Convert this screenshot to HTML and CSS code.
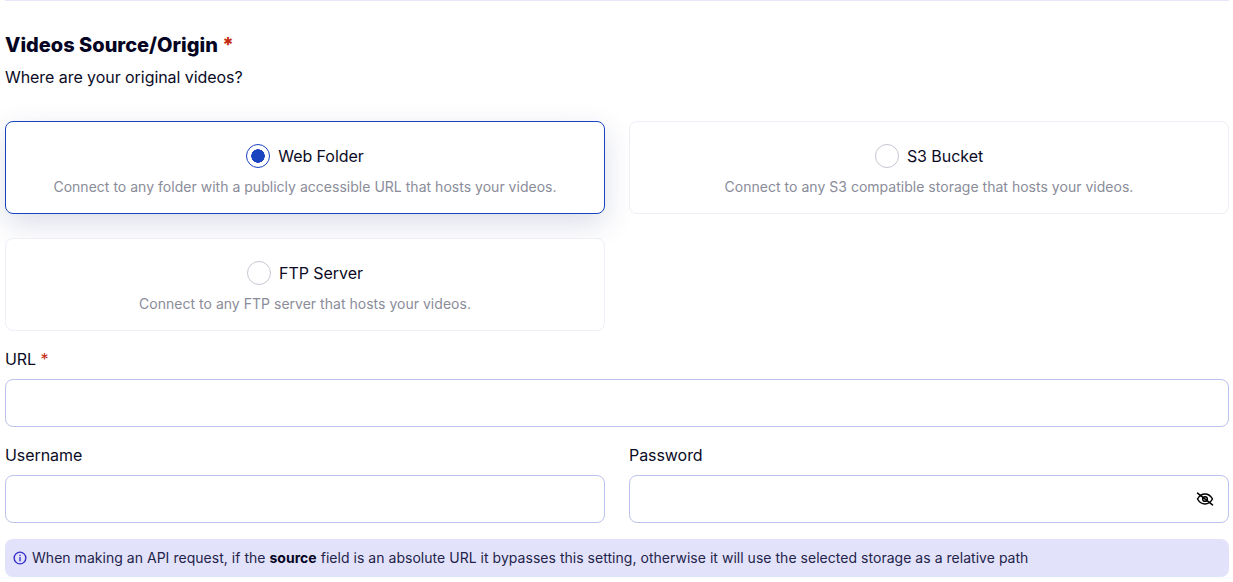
FILE: index.html
```html
<!DOCTYPE html>
<html lang="en">
<head>
    <meta charset="UTF-8" />
    <title>Videos Source/Origin</title>
    <link rel="stylesheet" href="styles.css">
</head>

<body>
    <div class="page">
        <section class="section">
            <h2 class="section-title">Videos Source/Origin <span class="req">*</span></h2>
            <p class="section-sub">Where are your original videos?</p>

            <div class="options">
                <div class="option selected">
                    <div class="option-head">
                        <span class="radio"></span>
                        <span class="option-name">Web Folder</span>
                    </div>
                    <p class="option-desc">Connect to any folder with a publicly accessible URL that hosts your videos.</p>
                </div>
                <div class="option">
                    <div class="option-head">
                        <span class="radio"></span>
                        <span class="option-name">S3 Bucket</span>
                    </div>
                    <p class="option-desc">Connect to any S3 compatible storage that hosts your videos.</p>
                </div>
                <div class="option">
                    <div class="option-head">
                        <span class="radio"></span>
                        <span class="option-name">FTP Server</span>
                    </div>
                    <p class="option-desc">Connect to any FTP server that hosts your videos.</p>
                </div>
            </div>

            <div class="field">
                <label class="field-label">URL <span class="req">*</span></label>
                <div class="input"></div>
            </div>

            <div class="field-row">
                <div class="field">
                    <label class="field-label">Username</label>
                    <div class="input"></div>
                </div>
                <div class="field">
                    <label class="field-label">Password</label>
                    <div class="input input-pwd">
                        <svg class="eye" viewBox="0 0 24 24" fill="none" stroke="#000" stroke-width="1.800" stroke-linecap="round" stroke-linejoin="round">
                            <path d="M3 12c2.300-4 5.300-6 9-6s6.700 2 9 6c-2.300 4-5.300 6-9 6s-6.700-2-9-6z"/>
                            <circle cx="12" cy="12" r="2.800"/>
                            <path d="M3 5l18 14"/>
                        </svg>
                    </div>
                </div>
            </div>

            <div class="notice">
                <svg class="info" viewBox="0 0 24 24" fill="none" stroke="#3730c9" stroke-width="2.400" stroke-linecap="round">
                    <circle cx="12" cy="12" r="10"/>
                    <path d="M12 11v6"/>
                    <path d="M12 7.300v.2"/>
                </svg>
                <span>When making an API request, if the <b>source</b> field is an absolute URL it bypasses this setting, otherwise it will use the selected storage as a relative path</span>
            </div>
        </section>
    </div>
</body>
</html>
```

FILE: styles.css
```css
* {
    box-sizing: border-box;
}

html, body {
    height: 582px;
    overflow: hidden;
}

body {
    margin: 0;
    padding: 0;
    background: #fff;
    font-family: Inter, "Liberation Sans", sans-serif;
    color: #0b0b26;
}

.page {
    padding: 0 4px 0 5px;
}

.section {
    border-top: 1px solid #e6e8fa;
    padding-top: 32px;
}

.section-title {
    margin: 0;
    font-size: 20px;
    line-height: 24px;
    font-weight: 800;
    color: #050523;
}

.req {
    color: #c42b10;
}

.section-sub {
    margin: 8px 0 0 0;
    font-size: 16px;
    line-height: 24px;
    letter-spacing: -0.06px;
}

.options {
    display: grid;
    grid-template-columns: 600px 600px;
    column-gap: 24px;
    row-gap: 24px;
    margin-top: 32px;
}

.option {
    height: 93px;
    padding-top: 22px;
    border: 1px solid #eeeef6;
    border-radius: 8px;
    background: #fff;
    text-align: center;
}

.option.selected {
    border-color: #1a43bf;
    box-shadow: 0 10px 30px rgba(40, 50, 110, 0.16);
}

.option-head {
    display: flex;
    justify-content: center;
    align-items: center;
    gap: 8px;
    height: 24px;
}

.radio {
    width: 24px;
    height: 24px;
    border: 1px solid #c6c8d2;
    border-radius: 50%;
    background: #fff;
}

.selected .radio {
    border-color: #1a43bf;
    background: radial-gradient(circle, #1a43bf 0 6.500px, #fff 7px);
}

.option-name {
    font-size: 16px;
    line-height: 24px;
    letter-spacing: -0.06px;
}

.option-desc {
    margin: 9px 0 0 0;
    font-size: 14px;
    line-height: 20px;
    letter-spacing: 0.02px;
    color: #8a8c99;
}

.field {
    margin-top: 16px;
}

.field-label {
    display: block;
    font-size: 16px;
    line-height: 24px;
    letter-spacing: -0.06px;
}

.input {
    height: 48px;
    margin-top: 8px;
    border: 1px solid #bcc2ea;
    border-radius: 8px;
    background: #fff;
}

.input-pwd {
    display: flex;
    justify-content: flex-end;
    align-items: center;
    padding-right: 13px;
}

.eye {
    width: 20px;
    height: 20px;
}

.field-row {
    display: grid;
    grid-template-columns: 600px 600px;
    column-gap: 24px;
}

.notice {
    display: flex;
    align-items: center;
    gap: 5px;
    height: 38px;
    margin-top: 16px;
    padding: 0 8px;
    border-radius: 8px;
    background: #e2e2fb;
    font-size: 14px;
    line-height: 20px;
    letter-spacing: 0.03px;
    color: #24244a;
}

.notice b {
    color: #050523;
}

.info {
    width: 14px;
    height: 14px;
    flex-shrink: 0;
}
```
